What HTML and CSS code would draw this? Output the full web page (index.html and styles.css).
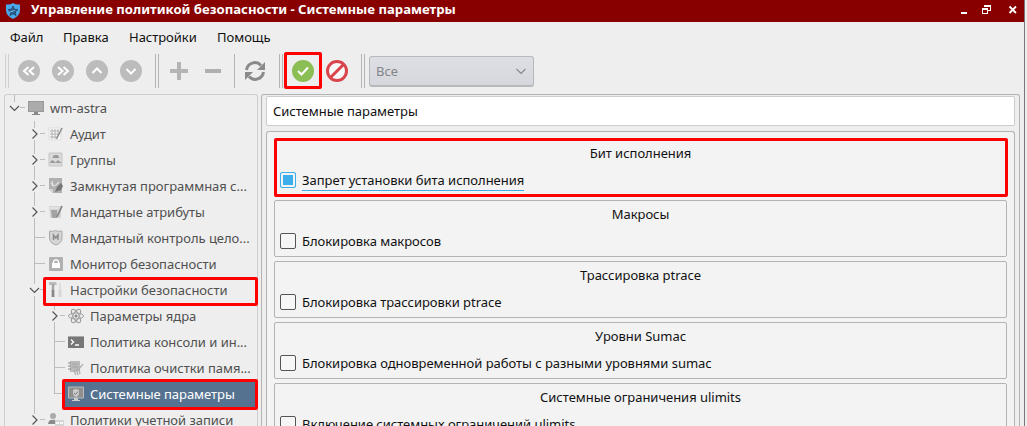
FILE: index.html
```html
<!DOCTYPE html>
<html lang="ru">
<head>
<meta charset="utf-8">
<title>Управление политикой безопасности</title>
<link rel="stylesheet" href="styles.css">
</head>
<body>
<svg width="0" height="0" class="defs">
  <defs>
    <path id="right" d="M-3 -4.5L1.5 0L-3 4.5" class="chev"/>
    <path id="down" d="M-4.5 -2L0 2.5L4.5 -2" class="chev"/>
  </defs>
</svg>
<div class="window">
  <header class="titlebar">
    <svg class="shield" width="16" height="16" viewBox="0 0 16 16"><path d="M1 1.5Q5 2 8 0Q11 2 15 1.5V7Q15 13 8 16Q1 13 1 7Z" fill="#4aa9ea"/><path d="M8 3L9.4 6.2L13 6.6L10.4 9L11 12.5L8 10.8L5 12.5L5.6 9L3 6.6L6.6 6.2Z" fill="#2c5e8c" stroke="#1e3d5c" stroke-width=".7"/><path d="M5 9L9.5 7.5" stroke="#7cc1f0"/></svg>
    <h1>Управление политикой безопасности - Системные параметры</h1>
    <svg class="controls" width="60" height="22" viewBox="0 0 60 22" shape-rendering="crispEdges"><path d="M1 12h6v2H1z" fill="#fff"/><path d="M25 6v-1h5v5h-2M22.500 9.500h5v4h-5z" fill="none" stroke="#fff"/><path d="M24 5h7v2h-7zM22 8h6v2h-6z" fill="#fff"/><path d="M49.500 6.500L56 13M56 6.500L49.500 13" stroke="#fff" stroke-width="1.800" shape-rendering="auto"/></svg>
  </header>
  <nav class="menu"><span class="m1">Файл</span><span class="m2">Правка</span><span class="m3">Настройки</span><span class="m4">Помощь</span></nav>
  <div class="toolbar">
    <i class="handle light"></i>
    <svg class="tool" viewBox="-17 -17 34 34"><circle r="11" fill="#bcbcbc"/><path d="M-.5 -4L-5 0L-.5 4M5 -4L.5 0L5 4" class="arrow"/></svg>
    <svg class="tool" viewBox="-17 -17 34 34"><circle r="11" fill="#bcbcbc"/><path d="M.5 -4L5 0L.5 4M-5 -4L-.5 0L-5 4" class="arrow"/></svg>
    <svg class="tool" viewBox="-17 -17 34 34"><circle r="11" fill="#bcbcbc"/><path d="M-4.500 2L0 -2.500L4.500 2" class="arrow"/></svg>
    <svg class="tool" viewBox="-17 -17 34 34"><circle r="11" fill="#bcbcbc"/><path d="M-4.500 -2L0 2.500L4.500 -2" class="arrow"/></svg>
    <i class="handle"></i>
    <svg class="tool" viewBox="-17 -17 34 34"><path d="M-9 0H9M0 -9V9" stroke="#b4b4b4" stroke-width="4"/></svg>
    <svg class="tool" viewBox="-17 -17 34 34"><path d="M-8 0H8" stroke="#b0b0b0" stroke-width="4"/></svg>
    <i class="separator"></i>
    <svg class="tool" viewBox="-17 -17 34 34"><path d="M-8.500 -1C-7.500 -8 1 -11 6 -5.500M8.500 1C7.500 8 -1 11 -6 5.500" fill="none" stroke="#8a8a8a" stroke-width="3"/><path d="M10 -9V-1H2ZM-10 9V1H-2Z" fill="#8a8a8a"/></svg>
    <i class="handle"></i>
    <svg class="tool" viewBox="-17 -17 34 34"><circle r="11" fill="#8cbe56"/><path d="M-5 0L-1.500 3.500L5 -3.500" class="arrow"/></svg>
    <svg class="tool" viewBox="-17 -17 34 34"><circle r="9.500" fill="#f8f8f8" stroke="#da444c" stroke-width="3"/><path d="M-6 6L6 -6" stroke="#da444c" stroke-width="3"/></svg>
    <i class="handle"></i>
    <div class="combo"><span>Все</span><svg width="12" height="8" viewBox="-6 -4 12 8"><path d="M-4.500 -2L0 2.500L4.500 -2" fill="none" stroke="#88898c" stroke-width="1.200"/></svg></div>
    <div class="mark apply"></div>
  </div>
  <main>
    <aside class="tree">
      <div class="row"><svg class="g0" viewBox="5 0 20 26"><path d="M14.500 0V7M20 12.500H25" class="line"/><use href="#down" x="14.500" y="13"/></svg>
        <svg class="icon root" viewBox="0 0 16 16"><path d="M0 1h16v11H0z" fill="#999"/><path d="M1 2h14v9H1z" fill="#ababab"/><path d="M6 12h4v2h2v1H4v-1h2z" fill="#888"/></svg><span>wm-astra</span></div>
      <div class="row"><svg class="g1" viewBox="5 0 43 26"><path d="M34.500 0V7M34.500 19V26M40 12.500H45" class="line"/><use href="#right" x="35.500" y="13"/></svg>
        <svg class="icon" viewBox="0 0 16 16"><path d="M1 2h12v12H1z" fill="#fafafa" stroke="#ddd"/><path d="M2 5h9M2 8h8M2 11h7M4 3v10M7 3v10M10 3v7" stroke="#b0b0b0"/><path d="M14 2L8.500 13" stroke="#8d8d8d" stroke-width="1.600"/></svg><span>Аудит</span></div>
      <div class="row"><svg class="g1" viewBox="5 0 43 26"><path d="M34.500 0V7M34.500 19V26M40 12.500H45" class="line"/><use href="#right" x="35.500" y="13"/></svg>
        <svg class="icon" viewBox="0 0 16 16"><path d="M1 1h13v13H1z" fill="#dadada" stroke="#c7c7c7"/><path d="M4.500 6Q5 2.500 8 3Q11 2.500 11 6ZM2 11Q3 7 6 9L8 11ZM8 11Q9 7 11 9L14 11Z" fill="#9a9a9a"/></svg><span>Группы</span></div>
      <div class="row"><svg class="g1" viewBox="5 0 43 26"><path d="M34.500 0V7M34.500 19V26M40 12.500H45" class="line"/><use href="#right" x="35.500" y="13"/></svg>
        <svg class="icon" viewBox="0 0 16 16"><path d="M1 0h13v15H5l-4-4z" fill="#b0b0b0"/><path d="M3 5l2 3l3-1l3-3M4 3l1 5" fill="none" stroke="#dedede" stroke-width="1.300"/><path d="M13 5L9 9L7 14L13 12L15 8Z" fill="#777"/><path d="M1 11h4v4" fill="#d5d5d5"/></svg><span>Замкнутая программная с...</span></div>
      <div class="row"><svg class="g1" viewBox="5 0 43 26"><path d="M34.500 0V7M34.500 19V26M40 12.500H45" class="line"/><use href="#right" x="35.500" y="13"/></svg>
        <svg class="icon" viewBox="0 0 16 16"><path d="M1 2h12v12H2z" fill="#d5d5d5"/><path d="M3 6h6v8H4z" fill="#a2a2a2"/><path d="M2 4h10" stroke="#eee"/><path d="M14 2L9 13" stroke="#858585" stroke-width="1.800"/></svg><span>Мандатные атрибуты</span></div>
      <div class="row"><svg class="g1" viewBox="5 0 43 26"><path d="M34.500 0V26M35 12.500H45" class="line"/></svg>
        <svg class="icon" viewBox="0 0 16 16"><path d="M1.500 1Q5 2 7.500 .5Q10 2 14 1V8Q14 13 8 15Q1.500 13 1.500 8Z" fill="#d4d4d4" stroke="#aaa"/><path d="M5.500 10V5L7.800 8L10 5V10" fill="none" stroke="#8a8a8a" stroke-width="1.400"/></svg><span>Мандатный контроль цело...</span></div>
      <div class="row"><svg class="g1" viewBox="5 0 43 26"><path d="M34.500 0V26M35 12.500H45" class="line"/></svg>
        <svg class="icon" viewBox="0 0 16 16"><rect x="1" y="1" width="14" height="14" rx="1" fill="#b0b0b0"/><path d="M5.500 8V5.500Q8 2 10.500 5.500V8" fill="none" stroke="#fff" stroke-width="1.300"/><path d="M4 7h8v5H4z" fill="#fff"/></svg><span>Монитор безопасности</span></div>
      <div class="row"><svg class="g1" viewBox="5 0 43 26"><path d="M34.500 0V7M34.500 19V26M40 12.500H45" class="line"/><use href="#down" x="34.500" y="13"/></svg>
        <svg class="icon" viewBox="0 0 16 16"><path d="M1 0h7l1 3H1z" fill="#bbb"/><path d="M5 2v13" stroke="#a5a5a5" stroke-width="2.500"/><path d="M5 8v7" stroke="#888" stroke-width="2.500"/><path d="M12 1v7" stroke="#ccc"/><path d="M12 8v7" stroke="#d7d7d7" stroke-width="3"/></svg><span>Настройки безопасности</span><div class="mark settings"></div></div>
      <div class="row"><svg class="g2" viewBox="5 0 62 26"><path d="M34.500 0V26M54.500 0V7M54.500 19V26M60 12.500H65" class="line"/><use href="#right" x="55.500" y="13"/></svg>
        <svg class="icon deep" viewBox="0 0 16 16"><g fill="none" stroke="#a0a0a0"><ellipse cx="8" cy="8" rx="7.500" ry="3"/><ellipse cx="8" cy="8" rx="7.500" ry="3" transform="rotate(60 8 8)"/><ellipse cx="8" cy="8" rx="7.500" ry="3" transform="rotate(120 8 8)"/></g><circle cx="8" cy="8" r="1.500" fill="#888"/></svg><span>Параметры ядра</span></div>
      <div class="row"><svg class="g2" viewBox="5 0 62 26"><path d="M34.500 0V26M54.500 0V26M55 12.500H65" class="line"/></svg>
        <svg class="icon deep" viewBox="0 0 16 16"><path d="M0 2h16v12H0z" fill="#777"/><path d="M0 2h16v1H0z" fill="#aaa"/><path d="M3 5.500l2.500 2.500l-2.500 2.500M7 11h4" fill="none" stroke="#fff" stroke-width="1.300"/></svg><span>Политика консоли и ин...</span></div>
      <div class="row"><svg class="g2" viewBox="5 0 62 26"><path d="M34.500 0V26M54.500 0V26M55 12.500H65" class="line"/></svg>
        <svg class="icon deep" viewBox="0 0 16 16"><path d="M2 1h10v9l-3 2H2z" fill="#bababa"/><path d="M0 3h3M0 6h3M0 9h3" stroke="#888"/><path d="M4 4h6M4 7h6" stroke="#a5a5a5"/><path d="M15 4L11 9L7 10M6 11l2 4M9 10l1 5M11 9l1 5" fill="none" stroke="#b0b0b0" stroke-width="1.300"/></svg><span>Политика очистки памя...</span></div>
      <div class="row selected"><svg class="g2" viewBox="5 0 62 26"><path d="M34.500 0V26M54.500 0V13M55 12.500H65" class="line"/></svg>
        <svg class="icon deep" viewBox="0 0 16 16"><path d="M.5 1h15v11H.5z" fill="#8e8e8e" stroke="#bbb"/><path d="M5 4l3-1l3 1v3q0 3-3 4q-3-1-3-4z" fill="#ccc"/><path d="M6 7l1.500 1.500L10 5.500" fill="none" stroke="#777"/><path d="M6 12h4v2h2v1H4v-1h2z" fill="#ccc"/></svg><span>Системные параметры</span><div class="mark params"></div></div>
      <div class="row"><svg class="g1" viewBox="5 0 43 26"><path d="M34.500 0V7M40 12.500H45" class="line"/><use href="#right" x="35.500" y="13"/></svg>
        <svg class="icon" viewBox="0 0 16 16"><circle cx="5" cy="4" r="3" fill="#aaa"/><path d="M0 12Q1 7 5 8Q9 7 10 12Z" fill="#8c8c8c"/><path d="M7 8h9v6H7z" fill="#d5d5d5"/><path d="M8 11h3M12 11h3" stroke="#f8f8f8" stroke-width="2"/></svg><span>Политики учетной записи</span></div>
    </aside>
    <section class="content">
      <div class="caption">Системные параметры</div>
      <div class="scroll">
        <div class="group"><h2>Бит исполнения</h2><label><i class="box on"></i><span class="link">Запрет установки бита исполнения</span></label><div class="mark bit"></div></div>
        <div class="group"><h2>Макросы</h2><label><i class="box"></i><span>Блокировка макросов</span></label></div>
        <div class="group"><h2>Трассировка ptrace</h2><label><i class="box"></i><span>Блокировка трассировки ptrace</span></label></div>
        <div class="group"><h2>Уровни Sumac</h2><label><i class="box"></i><span>Блокировка одновременной работы с разными уровнями sumac</span></label></div>
        <div class="group"><h2>Системные ограничения ulimits</h2><label><i class="box"></i><span>Включение системных ограничений ulimits</span></label></div>
      </div>
    </section>
  </main>
</div>
</body>
</html>
```
FILE: styles.css
```css
* { box-sizing: border-box; }
body { margin: 0; height: 426px; overflow: hidden; background: #eee; font: 13px/20px "Noto Sans", sans-serif; letter-spacing: -0.03px; color: #111; }
.defs { display: block; height: 0; }
.window { display: flex; flex-direction: column; width: 1025px; height: 426px; border-right: 1px solid #777; background: #eeeeee; }
.titlebar { display: flex; align-items: center; flex: 0 0 22px; background: #880000; color: #fff; }
.shield { margin: 0 0 1px 5px; }
h1 { margin: 0 auto 4px 10px; font-size: 13.15px; letter-spacing: 0; line-height: 18px; font-weight: 700; white-space: nowrap; }
.controls { margin-right: 4px; }
.menu { display: flex; flex: 0 0 29px; padding: 5px 0 0 10px; }
.m1 { width: 53px; } .m2 { width: 66px; } .m3 { width: 88px; }
.toolbar { position: relative; display: flex; align-items: center; flex: 0 0 42px; padding: 1px 0; }
.tool { flex: none; width: 34px; height: 34px; margin-bottom: 2px; }
.arrow { fill: none; stroke: #fff; stroke-width: 2; }
.handle { width: 4px; height: 34px; margin: 0 3px 2px 7px; border: 1px solid #b4b4b4; border-width: 0 1px; }
.handle.light { margin-left: 5px; border-color: #d0d0d0; }
.separator { width: 1px; height: 34px; margin: 0 3px 2px 4px; background: #b4b4b4; }
.combo { display: flex; align-items: center; justify-content: space-between; width: 165px; height: 31px; margin: 0 0 1px 1px; padding: 0 6px; border: 1px solid #b7b8bc; border-bottom-width: 2px; border-radius: 3px; background: linear-gradient(#dedfe4, #d6d7dc); color: #858588; }
.mark { position: absolute; border: 3px solid #f00; border-radius: 2px; z-index: 2; }
.apply { left: 284px; top: 1px; width: 38px; height: 37px; }
main { display: flex; flex: 1; min-height: 0; gap: 3px; padding: 1px 0 0 4px; }
.tree { width: 254px; border: 1px solid #cecece; border-bottom: 0; border-radius: 3px 3px 0 0; }
.row { position: relative; display: flex; align-items: center; height: 26px; color: #505050; white-space: nowrap; }
.g0, .g1, .g2 { flex: none; height: 26px; }
.g0 { width: 20px; } .g1 { width: 43px; } .g2 { width: 62px; }
.line { fill: none; stroke: #bdbdbd; }
.chev { fill: none; stroke: #555; stroke-width: 1.2; }
.icon { flex: none; width: 16px; height: 16px; margin-right: 6px; }
.icon.root { margin: 0 6px 0 3px; }
.icon.deep { margin: 0 6px 0 1px; }
.row .icon + span { line-height: 24px; }
.selected { color: #fff; background: linear-gradient(#557291, #557291) 60px 0 / 190px 26px no-repeat; }
.settings { left: 38px; top: 0; width: 215px; height: 29px; }
.params { left: 57px; top: -2px; width: 196px; height: 31px; }
.content { display: flex; flex-direction: column; gap: 5px; width: 759px; padding: 1px 4px 0; border: 1px solid #b3b3b3; border-bottom: 0; border-radius: 3px 3px 0 0; }
.caption { flex: 0 0 30px; padding: 4px 6px; border: 1px solid #cdcdcd; border-radius: 2px; background: #fff; }
.scroll { display: flex; flex: 1; flex-direction: column; gap: 4px; min-height: 0; overflow: hidden; padding: 7px; border: 1px solid #b3b3b3; border-bottom: 0; border-radius: 3px 3px 0 0; background: #f3f3f3; }
.group { position: relative; flex: 0 0 57px; padding: 3px 5px; border: 1px solid #b3b3b3; border-radius: 2px; }
h2 { margin: 0; font: inherit; text-align: center; }
label { display: flex; align-items: center; height: 20px; margin-top: 7px; }
.box { width: 16px; height: 16px; margin-right: 6px; border: 1px solid #555; border-radius: 2px; background: #f6f6f6; }
.box.on { border-color: #3daee9; background: #3daee9; box-shadow: inset 0 0 0 2px #f3f3f3; }
.link { box-shadow: 0 1px 0 #3daee9; }
.bit { left: -1px; top: -2px; width: 734px; height: 59px; }
```
